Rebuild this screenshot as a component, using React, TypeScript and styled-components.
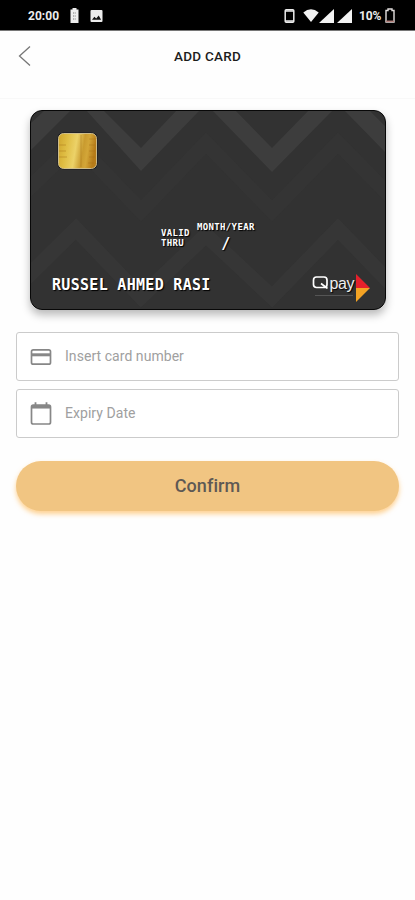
import React from "react";
import styled, { createGlobalStyle } from "styled-components";

const GlobalStyle = createGlobalStyle`
  * { box-sizing: border-box; }
  body { margin: 0; background: #fefefe; font-family: Roboto, "Liberation Sans", sans-serif; }
`;

const Screen = styled.div`
  width: 415px;
  height: 900px;
  overflow: hidden;
  background: #fefefe;
`;

const StatusBar = styled.div`
  display: flex;
  align-items: center;
  justify-content: space-between;
  height: 31px;
  padding: 1px 20px 0 28px;
  background: #000;
  border-bottom: 1px solid #777;
  color: #ececec;
  font-size: 12px;
  font-weight: 700;
`;

const StatusGroup = styled.div`
  display: flex;
  align-items: center;
`;

const Clock = styled.span`
  width: 42px;
  letter-spacing: 0.05px;
`;

const Percent = styled.span`
  width: 26px;
  font-size: 12px;
  letter-spacing: -0.1px;
`;

const Glyph = styled.svg<{ $gap?: number }>`
  display: block;
  flex: none;
  margin-right: ${(p) => p.$gap ?? 0}px;
`;

const Header = styled.header`
  display: grid;
  grid-template-columns: 40px 1fr 40px;
  align-items: center;
  height: 68px;
  padding-bottom: 18px;
  border-bottom: 1px solid #f8f8f8;
`;

const BackButton = styled.button`
  display: flex;
  height: 22px;
  padding: 0 0 0 18px;
  border: 0;
  background: none;
`;

const Title = styled.h1`
  margin: 0;
  text-align: center;
  color: #1c1c1c;
  font-size: 13.5px;
  line-height: 18px;
  font-weight: 500;
  letter-spacing: 0.25px;
`;

const Content = styled.main`
  display: flex;
  flex-direction: column;
  padding: 11px 16px 0;
`;

const BankCard = styled.section`
  position: relative;
  display: flex;
  flex-direction: column;
  height: 200px;
  overflow: hidden;
  border: 1.5px solid #080808;
  border-radius: 12px;
  background: #323232;
  color: #fff;
  font-family: "DejaVu Sans Mono", monospace;
  font-weight: 700;
  text-shadow: 1px 1px 1px #000;
`;

const CardShadow = styled.div`
  width: 356px;
  margin: 0 14px 22px;
  border-radius: 12px;
  box-shadow: 0 5px 9px rgba(0, 0, 0, 0.27);
`;

const Pattern = styled.svg`
  position: absolute;
  inset: -1px;
`;

const ChipRow = styled.div`
  position: relative;
  height: 62px;
  padding: 21px 0 0 26px;
`;

const ValidRow = styled.div`
  position: relative;
  display: flex;
  gap: 7px;
  margin-top: 48px;
  padding-left: 130px;
  font-size: 9px;
  letter-spacing: 0.35px;
`;

const ValidLabel = styled.div`
  width: 29px;
  padding-top: 8px;
  line-height: 9.5px;
`;

const Expiry = styled.div`
  display: flex;
  flex-direction: column;
  align-items: center;
  line-height: 12px;
`;

const Slash = styled.span`
  margin-top: 2px;
  font-size: 15px;
  line-height: 18px;
`;

const CardFooter = styled.div`
  position: relative;
  display: flex;
  justify-content: space-between;
  align-items: center;
  height: 32px;
  margin-top: auto;
  margin-bottom: 5px;
  padding: 0 15px 0 21px;
`;

const Holder = styled.span`
  padding-bottom: 7px;
  font-size: 15px;
  line-height: 20px;
  letter-spacing: 0.3px;
  white-space: nowrap;
`;

const Brand = styled.div`
  display: flex;
  align-items: center;
`;

const BrandName = styled.span`
  display: flex;
  align-items: baseline;
  height: 22px;
  margin: 0 2px 7px 0;
  color: #eee;
  background: linear-gradient(#555, #555) 3px 100% / 38px 1px no-repeat;
  font: 400 16px/20px "Liberation Sans", sans-serif;
  letter-spacing: -0.4px;
`;

const Field = styled.label`
  display: flex;
  align-items: center;
  height: 49px;
  margin-bottom: 8px;
  padding-left: 13px;
  border: 1.5px solid #cbcbcb;
  border-radius: 3px;
  background: #fff;
`;

const Input = styled.input`
  flex: 1;
  height: 40px;
  margin-left: 13px;
  padding: 0 0 2px;
  border: 0;
  outline: 0;
  background: transparent;
  font: 400 14px Roboto, sans-serif;
  letter-spacing: 0.05px;
  &::placeholder { color: #a0a0a0; opacity: 1; }
`;

const Confirm = styled.button`
  height: 50px;
  margin-top: 15px;
  padding: 0 0 1px;
  border: 0;
  border-radius: 25px;
  background: #f1c582;
  box-shadow: 0 3px 5px rgba(255, 185, 85, 0.65);
  color: #5e5954;
  font: 500 18px Roboto, sans-serif;
  letter-spacing: 0.1px;
`;

const CardPattern = () => (
  <Pattern width="356" height="200" viewBox="30 110 356 200">
    <g fill="none" stroke="#383838" strokeWidth="15">
      <path d="M22 195L76 143L141 211L206 143L272 211L338 143L394 200" opacity=".4" />
      <path d="M22 282L76 229L141 297L206 235L272 297L338 229L394 287" opacity=".75" />
    </g>
    <path
      d="M45 110H71L30 151V124ZM86 110H103L141 148L177 110H200L141 171ZM212 110H235L272 148L309 110H333L272 172ZM344 110H369L386 127V153Z"
      fill="#3d3d3d"
    />
  </Pattern>
);

const Chip = () => (
  <Glyph width="41" height="38" viewBox="0 0 41 38">
    <defs>
      <linearGradient id="gold" x1="0" y1="0" x2="1" y2=".15">
        <stop offset="0" stopColor="#cfa52c" />
        <stop offset=".25" stopColor="#dfbd43" />
        <stop offset=".5" stopColor="#ecd268" />
        <stop offset=".7" stopColor="#c99b2f" />
        <stop offset=".82" stopColor="#d3a638" />
        <stop offset="1" stopColor="#b77c19" />
      </linearGradient>
    </defs>
    <rect x=".5" y=".5" width="40" height="37" rx="6" fill="#17171c" />
    <rect x="1.5" y="1.5" width="38" height="35" rx="5" fill="url(#gold)" stroke="#e4d4a2" strokeWidth=".8" />
    <path
      d="M2 13h7m-7 6h7m-7 6h8M32 7h6m-6 6h6m-6 6h6m-6 6h6m-7 6h6M24 3v32"
      stroke="#a36e17"
      strokeOpacity=".45"
    />
  </Glyph>
);

export default function App() {
  return (
    <Screen>
      <GlobalStyle />
      <StatusBar>
        <StatusGroup>
          <Clock>20:00</Clock>
          <Glyph $gap={11} width="9" height="15" viewBox="0 0 9 15">
            <path d="M2.5 0h4v1.5H8.5V15H.5V1.5h2z" fill="#ededed" />
            <path d="M3 5h3M3 8h3M3 11h3" stroke="#777" strokeDasharray="1 .7" />
          </Glyph>
          <Glyph width="13" height="12" viewBox="0 0 13 12">
            <rect x=".5" width="12" height="12" rx="1" fill="#ededed" />
            <path d="M2 9.7l2.4-3 1.8 1.8 2.5-3 2.4 4.2z" fill="#111" />
          </Glyph>
        </StatusGroup>
        <StatusGroup>
          <Glyph $gap={8} width="11" height="14" viewBox="0 0 11 14">
            <rect x="1.2" y=".8" width="8.6" height="12.4" rx="1" fill="none" stroke="#ececec" strokeWidth="1.5" />
            <path d="M1 2h9M1 12h9" stroke="#ececec" strokeWidth="1.6" />
          </Glyph>
          <Glyph width="16" height="13" viewBox="0 0 16 13">
            <path d="M.3 3.4Q8-2.8 15.7 3.4L8 13z" fill="#f3f3f3" />
          </Glyph>
          <Glyph $gap={3} width="15" height="14" viewBox="0 0 15 14">
            <path d="M15 0v14H0z" fill="#f3f3f3" />
          </Glyph>
          <Glyph $gap={7} width="15" height="14" viewBox="0 0 15 14">
            <path d="M15 0v14H0z" fill="#f3f3f3" />
          </Glyph>
          <Percent>10%</Percent>
          <Glyph width="10" height="15" viewBox="0 0 10 15">
            <path d="M3 1h4v1.5h2V14H1V2.5h2z" fill="none" stroke="#e4e0df" strokeWidth="1.4" />
            <path d="M1 13.3h8" stroke="#b27e79" strokeWidth="1.5" />
          </Glyph>
        </StatusGroup>
      </StatusBar>

      <Header>
        <BackButton aria-label="Back">
          <Glyph width="14" height="22" viewBox="0 0 14 22">
            <path d="M12 1.5L1.5 11L12 20.5" fill="none" stroke="#777" strokeWidth="1.3" />
          </Glyph>
        </BackButton>
        <Title>ADD CARD</Title>
      </Header>

      <Content>
        <CardShadow>
          <BankCard>
            <CardPattern />
            <ChipRow>
              <Chip />
            </ChipRow>
            <ValidRow>
              <ValidLabel>VALID THRU</ValidLabel>
              <Expiry>
                <span>MONTH/YEAR</span>
                <Slash>/</Slash>
              </Expiry>
            </ValidRow>
            <CardFooter>
              <Holder>RUSSEL AHMED RASI</Holder>
              <Brand>
                <BrandName>
                  <Glyph width="17" height="14" viewBox="0 0 17 14">
                    <path
                      d="M12 12.5H4.5Q1.5 12.5 1.5 9.5V5Q1.5 2 4.5 2H12Q15 2 15 5v4.5q0 3-3 3zM9 8.5l6.5 5"
                      fill="none"
                      stroke="#fff"
                      strokeWidth="1.7"
                    />
                  </Glyph>
                  pay
                </BrandName>
                <Glyph width="14" height="28" viewBox="0 0 14 28">
                  <path d="M0 0l14 14H0z" fill="#e5202b" />
                  <path d="M0 14h14L0 28z" fill="#f4a324" />
                </Glyph>
              </Brand>
            </CardFooter>
          </BankCard>
        </CardShadow>

        <Field>
          <Glyph width="22" height="18" viewBox="0 0 22 18">
            <rect x="1.5" y="1.8" width="19" height="14.4" rx="1.8" fill="none" stroke="#878787" strokeWidth="1.7" />
            <path d="M2 6.8h18" stroke="#878787" strokeWidth="3" />
          </Glyph>
          <Input placeholder="Insert card number" />
        </Field>
        <Field>
          <Glyph width="22" height="24" viewBox="0 0 22 24">
            <rect x="1.5" y="3.2" width="19" height="18.8" rx="1.8" fill="none" stroke="#878787" strokeWidth="1.7" />
            <path d="M2 4.8h18" stroke="#878787" strokeWidth="3.5" />
            <path d="M5.5 .3v4M16.5 .3v4" stroke="#878787" strokeWidth="1.8" />
          </Glyph>
          <Input placeholder="Expiry Date" />
        </Field>
        <Confirm>Confirm</Confirm>
      </Content>
    </Screen>
  );
}
